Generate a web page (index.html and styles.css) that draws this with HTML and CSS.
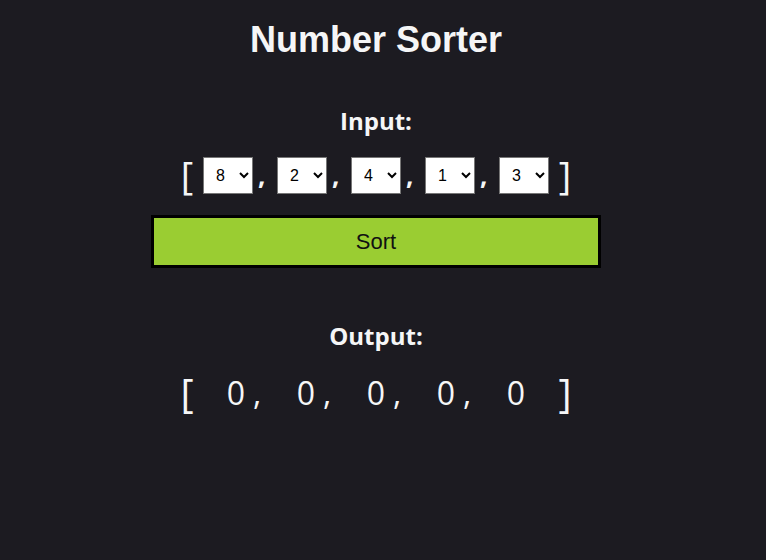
FILE: index.html
```html
<!DOCTYPE html>
<html>
<head>
<meta charset="utf-8">
<link rel="stylesheet" href="styles.css">
</head>
<body>
<div class="page">
  <h1 class="title">Number Sorter</h1>
  <h2 class="label">Input:</h2>
  <div class="row in-row">
    <span class="bracket">[</span>
    <select class="sel"><option>8</option></select><span class="comma">,</span>
    <select class="sel"><option>2</option></select><span class="comma">,</span>
    <select class="sel"><option>4</option></select><span class="comma">,</span>
    <select class="sel"><option>1</option></select><span class="comma">,</span>
    <select class="sel"><option>3</option></select>
    <span class="bracket">]</span>
  </div>
  <button class="sort">Sort</button>
  <h2 class="label out-label">Output:</h2>
  <div class="row out-row">
    <span class="bracket">[</span>
    <span class="num">0</span><span class="ocomma">,</span>
    <span class="num">0</span><span class="ocomma">,</span>
    <span class="num">0</span><span class="ocomma">,</span>
    <span class="num">0</span><span class="ocomma">,</span>
    <span class="num">0</span>
    <span class="bracket">]</span>
  </div>
</div>
</body>
</html>
```
FILE: styles.css
```css
html, body {
  margin: 0;
  padding: 0;
  background: #1c1b21;
  color: #f5f6f7;
}
.page {
  width: 752px;
  display: flex;
  flex-direction: column;
  align-items: center;
  font-family: "Liberation Sans", Arial, sans-serif;
}
.title {
  margin: 20px 0 0;
  font-size: 36px;
  font-weight: bold;
  line-height: 40px;
}
.label {
  font-family: "Open Sans", "Noto Sans", sans-serif;
  font-size: 24px;
  font-weight: 700;
  line-height: 32px;
  margin: 45px 0 0;
}
.out-label {
  margin-top: 52px;
}
.row {
  display: flex;
  align-items: center;
  font-family: "Open Sans", sans-serif;
}
.in-row {
  margin-top: 16px;
  height: 44px;
}
.bracket {
  font-size: 38px;
  font-weight: 400;
  line-height: 44px;
  width: 8px;
  display: flex;
  justify-content: center;
}
.in-row .bracket:first-child { margin-right: 12px; }
.in-row .bracket:last-child { margin-left: 12px; }
.sel {
  width: 50px;
  height: 37px;
  font-family: "Liberation Sans", Arial, sans-serif;
  font-size: 16px;
  padding: 0 4px 0 8px;
  background: #ffffff;
  color: #000;
  border: 1px solid #767676;
  border-radius: 0;
}
.comma {
  width: 24px;
  padding-left: 5px;
  box-sizing: border-box;
  font-size: 26px;
  font-weight: 700;
  line-height: 44px;
  align-self: flex-end;
  height: 44px;
}
.sort {
  margin-top: 18px;
  width: 450px;
  height: 53px;
  background: #9acd32;
  border: 3px solid #000;
  font-family: "Liberation Sans", Arial, sans-serif;
  font-size: 22px;
  color: #111;
  padding: 0;
}
.out-row {
  margin-top: 16px;
  height: 50px;
}
.out-row .bracket {
  font-size: 40px;
  line-height: 50px;
}
.out-row .bracket:first-child { margin-right: 22px; }
.out-row .bracket:last-child { margin-left: 22px; }
.num {
  width: 46px;
  text-align: center;
  font-size: 32px;
  font-weight: 400;
  line-height: 50px;
}
.ocomma {
  width: 30px;
  margin-left: -6px;
  font-size: 32px;
  line-height: 50px;
}
```
